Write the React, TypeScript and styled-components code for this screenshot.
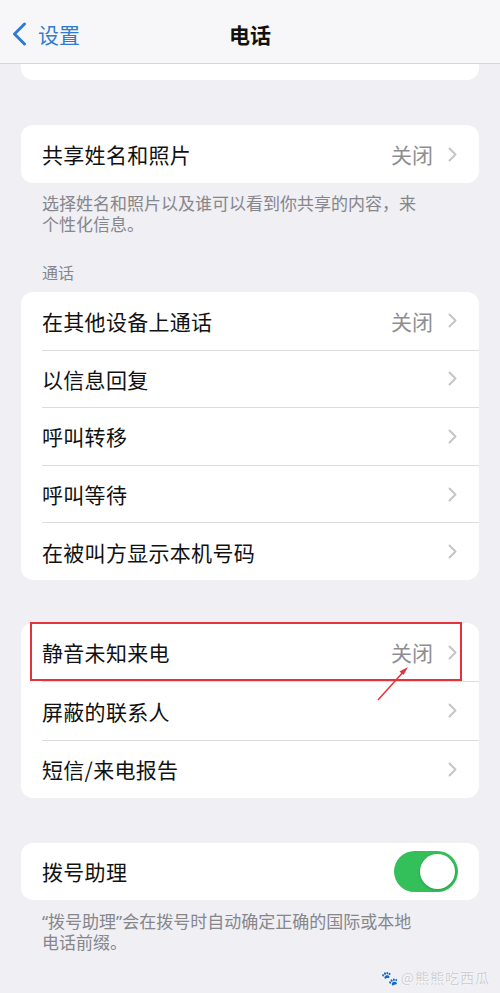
import React from 'react'
import styled, { createGlobalStyle } from 'styled-components'

const GlobalStyle = createGlobalStyle`
  html, body { margin: 0; padding: 0; }
  body {
    background: #efeff4;
    font-family: "Noto Sans CJK SC", "Noto Sans", sans-serif;
    -webkit-font-smoothing: antialiased;
  }
  * { box-sizing: border-box; }
`;

const Page = styled.div`
  width: 500px;
  min-height: 993px;
  background: #efeff4;
  position: relative;
  overflow: hidden;
`;

const NavBar = styled.div`
  height: 64px;
  background: #f7f7f9;
  border-bottom: 1px solid #d6d6da;
  display: flex;
  align-items: center;
  position: relative;
`;

const BackButton = styled.div`
  display: flex;
  align-items: center;
  gap: 11px;
  padding-left: 12px;
  padding-top: 5px;
  color: #2f7bd3;
  font-size: 21px;
  height: 100%;
`;

const NavTitle = styled.div`
  position: absolute;
  left: 0;
  right: 0;
  top: 5px;
  bottom: 0;
  display: flex;
  align-items: center;
  justify-content: center;
  font-size: 21px;
  font-weight: 600;
  color: #111;
  pointer-events: none;
`;

const Content = styled.div`
  padding: 0 21px;
  display: flex;
  flex-direction: column;
`;

const CutCard = styled.div`
  height: 16px;
  background: #fff;
  border-radius: 0 0 12px 12px;
`;

const Card = styled.div<{ $top: number }>`
  margin-top: ${p => p.$top}px;
  background: #fff;
  border-radius: 12px;
  position: relative;
`;

const Row = styled.div<{ $h: number }>`
  height: ${p => p.$h}px;
  display: flex;
  align-items: center;
  padding-left: 21px;
  position: relative;
  & + & > div:first-child {
    border-top: 1px solid #dcdce0;
  }
`;

const RowInner = styled.div`
  flex: 1;
  height: 100%;
  display: flex;
  align-items: center;
  padding-right: 22px;
`;

const Label = styled.span`
  flex: 1;
  font-size: 21px;
  color: #111;
  letter-spacing: 0.3px;
`;

const Value = styled.span`
  font-size: 21px;
  color: #8e8e92;
  margin-right: 15px;
`;

const Footer = styled.div<{ $top: number }>`
  padding: ${p => p.$top}px 21px 0 21px;
  font-family: "Noto Sans", "Noto Sans CJK SC", sans-serif;
  font-size: 17px;
  color: #86868b;
`;

const FooterLine = styled.div`
  height: 21px;
  line-height: 21px;
  white-space: nowrap;
`;

const SectionHeader = styled.div`
  margin-top: 27px;
  padding-left: 21px;
  font-size: 16px;
  line-height: 20px;
  color: #86868b;
`;

const Toggle = styled.div<{ $on: boolean }>`
  width: 64px;
  height: 41px;
  border-radius: 21px;
  background: ${p => (p.$on ? '#33c05a' : '#e5e5ea')};
  position: relative;
  margin-right: -1px;
  &::after {
    content: '';
    position: absolute;
    top: 3px;
    left: ${p => (p.$on ? '26px' : '3px')};
    width: 35px;
    height: 35px;
    border-radius: 50%;
    background: #fff;
    box-shadow: 0 1px 3px rgba(0, 0, 0, 0.2);
  }
`;

const Highlight = styled.div`
  position: absolute;
  left: 9px;
  top: -1px;
  width: 432px;
  height: 59px;
  border: 2px solid #e3323a;
  pointer-events: none;
`;

const ArrowLayer = styled.svg`
  position: absolute;
  left: 350px;
  top: 40px;
  pointer-events: none;
  overflow: visible;
`;

const Watermark = styled.div`
  position: absolute;
  right: 10px;
  bottom: 6px;
  font-size: 14px;
  color: #cfcfd3;
  text-shadow: 0 0 1px #fff, 0 0 2px #fff;
  letter-spacing: 1px;
  display: flex;
  align-items: center;
  gap: 2px;
`;

const Chevron = () => (
  <svg width="9" height="15" viewBox="0 0 9 15">
    <polyline points="1.5,1.5 7.5,7.5 1.5,13.5" fill="none" stroke="#c5c5c8" strokeWidth="2" strokeLinecap="round" strokeLinejoin="round" />
  </svg>
);

const BackChevron = () => (
  <svg width="15" height="24" viewBox="0 0 15 24">
    <polyline points="12.5,2 2.5,12 12.5,22" fill="none" stroke="#2f7bd3" strokeWidth="3" strokeLinecap="round" strokeLinejoin="round" />
  </svg>
);

type Item = { label: string; value?: string };

const NavRow = ({ label, value, h }: Item & { h: number }) => (
  <Row $h={h}>
    <RowInner>
      <Label>{label}</Label>
      {value && <Value>{value}</Value>}
      <Chevron />
    </RowInner>
  </Row>
);

const callItems: Item[] = [
  { label: '在其他设备上通话', value: '关闭' },
  { label: '以信息回复' },
  { label: '呼叫转移' },
  { label: '呼叫等待' },
  { label: '在被叫方显示本机号码' },
];

const blockItems: Item[] = [
  { label: '静音未知来电', value: '关闭' },
  { label: '屏蔽的联系人' },
  { label: '短信/来电报告' },
];

export default function App() {
  return (
    <Page>
      <GlobalStyle />
      <NavBar>
        <BackButton>
          <BackChevron />
          <span>设置</span>
        </BackButton>
        <NavTitle>电话</NavTitle>
      </NavBar>
      <Content>
        <CutCard />
        <Card $top={45}>
          <NavRow label="共享姓名和照片" value="关闭" h={58} />
        </Card>
        <Footer $top={10}>
          <FooterLine>选择姓名和照片以及谁可以看到你共享的内容，来</FooterLine>
          <FooterLine>个性化信息。</FooterLine>
        </Footer>
        <SectionHeader>通话</SectionHeader>
        <Card $top={10}>
          {callItems.map(it => (
            <NavRow key={it.label} {...it} h={57.6} />
          ))}
        </Card>
        <Card $top={43}>
          {blockItems.map(it => (
            <NavRow key={it.label} {...it} h={58.3} />
          ))}
          <Highlight />
          <ArrowLayer width="40" height="40" viewBox="0 0 40 40">
            <line x1="7" y1="37" x2="34" y2="7" stroke="#e3323a" strokeWidth="1.5" />
            <polygon points="37,4 28.5,8.5 32.5,12" fill="#e3323a" />
          </ArrowLayer>
        </Card>
        <Card $top={45}>
          <Row $h={57}>
            <RowInner>
              <Label>拨号助理</Label>
              <Toggle $on />
            </RowInner>
          </Row>
        </Card>
        <Footer $top={11}>
          <FooterLine>“拨号助理”会在拨号时自动确定正确的国际或本地</FooterLine>
          <FooterLine>电话前缀。</FooterLine>
        </Footer>
      </Content>
      <Watermark>
        <span>🐾</span>
        <span>@熊熊吃西瓜</span>
      </Watermark>
    </Page>
  );
}
